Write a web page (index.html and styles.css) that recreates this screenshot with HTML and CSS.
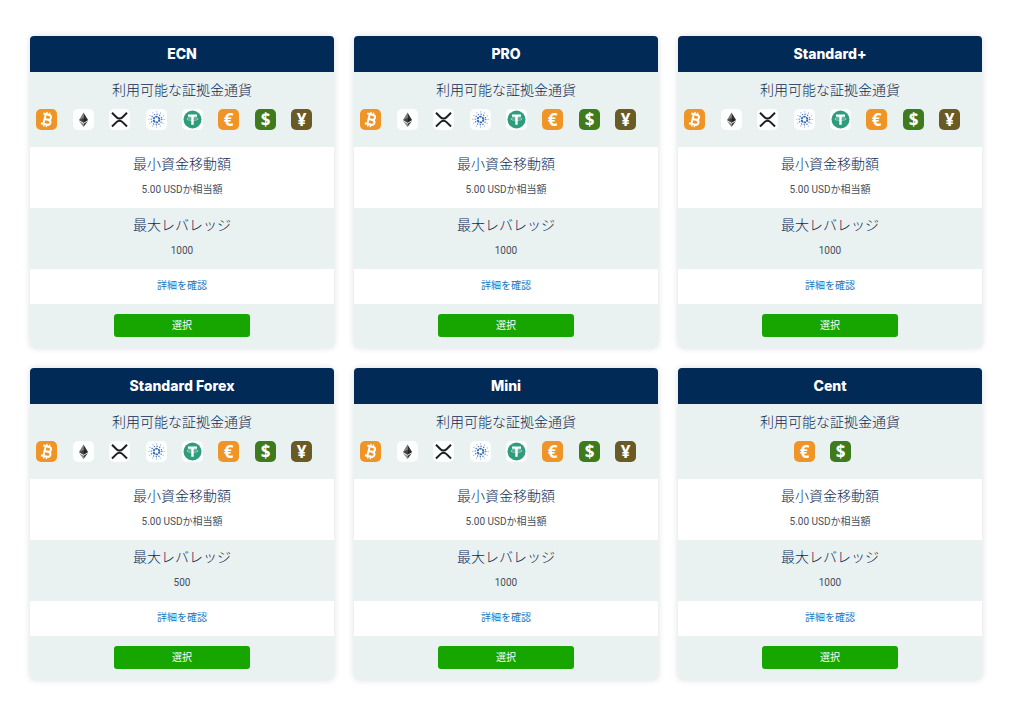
FILE: index.html
```html
<!DOCTYPE html>
<html lang="ja">
<head>
    <meta charset="UTF-8">
    <meta name="viewport" content="width=device-width, initial-scale=1.0">
    <title>口座タイプ</title>
    <link rel="stylesheet" href="styles.css">
</head>
<body>
    <!-- Currency icons shared by all cards -->
    <svg class="sprite" aria-hidden="true">
        <symbol id="btc" viewBox="0 0 21 21">
            <rect width="21" height="21" rx="5" fill="#ef9528"/>
            <g transform="rotate(14 10.5 10.5)" fill="none" stroke="#fff" stroke-width="2">
                <path d="M6 5.500h6a2.400 2.400 0 0 1 0 4.900H8.500M12 10.400h.6a2.500 2.500 0 0 1 0 5H6M8.500 5.500v9.900"/>
                <path d="M9.300 3v2.500M12 3v2.500M9.300 15.400V18M12 15.400V18" stroke-width="1.400"/>
            </g>
        </symbol>
        <symbol id="eth" viewBox="0 0 21 21">
            <rect width="21" height="21" rx="5" fill="#fdfefe"/>
            <path d="M10.5 3.500 6 11l4.500 2.700z" fill="#7d7d7d"/>
            <path d="M10.500 3.500 15 11l-4.500 2.700z" fill="#2f2f2f"/>
            <path d="M6 12l4.500 2.700V18z" fill="#8a8a8a"/>
            <path d="M15 12l-4.500 2.700V18z" fill="#3a3a3a"/>
            <path d="M6 11l4.500-2 4.500 2-4.500 2.700z" fill="#1c1c1c" opacity=".6"/>
        </symbol>
        <symbol id="xrp" viewBox="0 0 21 21">
            <rect width="21" height="21" rx="5" fill="#fdfefe"/>
            <path d="M3 3.800l4.500 4.400a4.200 4.200 0 0 0 6 0L18 3.800M3 17.500l4.500-4.400a4.200 4.200 0 0 1 6 0l4.500 4.400" fill="none" stroke="#1b1f22" stroke-width="2"/>
        </symbol>
        <symbol id="ada" viewBox="0 0 21 21">
            <rect width="21" height="21" rx="5" fill="#fdfefe"/>
            <g fill="none" stroke="#3468b4" stroke-linecap="round">
                <circle cx="10.500" cy="10.500" r="2.900" stroke-width="1.900" stroke-dasharray="2.300 .737" stroke-linecap="butt"/>
                <circle cx="10.500" cy="10.500" r="5.300" stroke-width="1.400" stroke-dasharray="0 2.775"/>
                <circle cx="10.500" cy="10.500" r="7.600" stroke-width="1" stroke-dasharray="0 3.979" opacity=".75"/>
            </g>
        </symbol>
        <symbol id="usdt" viewBox="0 0 21 21">
            <rect width="21" height="21" rx="5" fill="#fdfefe"/>
            <circle cx="10.500" cy="10.500" r="9" fill="#2f9c7c"/>
            <path d="M6 5.500h9v2.300h-3.300v8H9.300v-8H6z" fill="#fff"/>
            <ellipse cx="10.500" cy="10" rx="5.600" ry="1.300" fill="none" stroke="#fff" stroke-width=".5"/>
        </symbol>
        <symbol id="eur" viewBox="0 0 21 21">
            <rect width="21" height="21" rx="5" fill="#ef9528"/>
            <text x="10.5" y="16.500" class="sign">€</text>
        </symbol>
        <symbol id="usd" viewBox="0 0 21 21">
            <rect width="21" height="21" rx="5" fill="#3f7a1c"/>
            <text x="10.5" y="16.500" class="sign">$</text>
        </symbol>
        <symbol id="jpy" viewBox="0 0 21 21">
            <rect width="21" height="21" rx="5" fill="#6a5a26"/>
            <text x="10.5" y="16.500" class="sign">¥</text>
        </symbol>
    </svg>

    <main class="accounts">
        <section class="card">
            <h2 class="card-title">ECN</h2>
            <div class="currencies">
                <h3>利用可能な証拠金通貨</h3>
                <ul class="icons">
                    <li><svg role="img" aria-label="BTC"><use href="#btc"/></svg></li>
                    <li><svg role="img" aria-label="ETH"><use href="#eth"/></svg></li>
                    <li><svg role="img" aria-label="XRP"><use href="#xrp"/></svg></li>
                    <li><svg role="img" aria-label="ADA"><use href="#ada"/></svg></li>
                    <li><svg role="img" aria-label="USDT"><use href="#usdt"/></svg></li>
                    <li><svg role="img" aria-label="EUR"><use href="#eur"/></svg></li>
                    <li><svg role="img" aria-label="USD"><use href="#usd"/></svg></li>
                    <li><svg role="img" aria-label="JPY"><use href="#jpy"/></svg></li>
                </ul>
            </div>
            <div class="row white">
                <h3>最小資金移動額</h3>
                <p>5.00 USDか相当額</p>
            </div>
            <div class="row">
                <h3>最大レバレッジ</h3>
                <p>1000</p>
            </div>
            <div class="details white"><a href="#">詳細を確認</a></div>
            <div class="action"><button type="button">選択</button></div>
        </section>

        <section class="card">
            <h2 class="card-title">PRO</h2>
            <div class="currencies">
                <h3>利用可能な証拠金通貨</h3>
                <ul class="icons">
                    <li><svg role="img" aria-label="BTC"><use href="#btc"/></svg></li>
                    <li><svg role="img" aria-label="ETH"><use href="#eth"/></svg></li>
                    <li><svg role="img" aria-label="XRP"><use href="#xrp"/></svg></li>
                    <li><svg role="img" aria-label="ADA"><use href="#ada"/></svg></li>
                    <li><svg role="img" aria-label="USDT"><use href="#usdt"/></svg></li>
                    <li><svg role="img" aria-label="EUR"><use href="#eur"/></svg></li>
                    <li><svg role="img" aria-label="USD"><use href="#usd"/></svg></li>
                    <li><svg role="img" aria-label="JPY"><use href="#jpy"/></svg></li>
                </ul>
            </div>
            <div class="row white">
                <h3>最小資金移動額</h3>
                <p>5.00 USDか相当額</p>
            </div>
            <div class="row">
                <h3>最大レバレッジ</h3>
                <p>1000</p>
            </div>
            <div class="details white"><a href="#">詳細を確認</a></div>
            <div class="action"><button type="button">選択</button></div>
        </section>

        <section class="card">
            <h2 class="card-title">Standard+</h2>
            <div class="currencies">
                <h3>利用可能な証拠金通貨</h3>
                <ul class="icons">
                    <li><svg role="img" aria-label="BTC"><use href="#btc"/></svg></li>
                    <li><svg role="img" aria-label="ETH"><use href="#eth"/></svg></li>
                    <li><svg role="img" aria-label="XRP"><use href="#xrp"/></svg></li>
                    <li><svg role="img" aria-label="ADA"><use href="#ada"/></svg></li>
                    <li><svg role="img" aria-label="USDT"><use href="#usdt"/></svg></li>
                    <li><svg role="img" aria-label="EUR"><use href="#eur"/></svg></li>
                    <li><svg role="img" aria-label="USD"><use href="#usd"/></svg></li>
                    <li><svg role="img" aria-label="JPY"><use href="#jpy"/></svg></li>
                </ul>
            </div>
            <div class="row white">
                <h3>最小資金移動額</h3>
                <p>5.00 USDか相当額</p>
            </div>
            <div class="row">
                <h3>最大レバレッジ</h3>
                <p>1000</p>
            </div>
            <div class="details white"><a href="#">詳細を確認</a></div>
            <div class="action"><button type="button">選択</button></div>
        </section>

        <section class="card">
            <h2 class="card-title">Standard Forex</h2>
            <div class="currencies">
                <h3>利用可能な証拠金通貨</h3>
                <ul class="icons">
                    <li><svg role="img" aria-label="BTC"><use href="#btc"/></svg></li>
                    <li><svg role="img" aria-label="ETH"><use href="#eth"/></svg></li>
                    <li><svg role="img" aria-label="XRP"><use href="#xrp"/></svg></li>
                    <li><svg role="img" aria-label="ADA"><use href="#ada"/></svg></li>
                    <li><svg role="img" aria-label="USDT"><use href="#usdt"/></svg></li>
                    <li><svg role="img" aria-label="EUR"><use href="#eur"/></svg></li>
                    <li><svg role="img" aria-label="USD"><use href="#usd"/></svg></li>
                    <li><svg role="img" aria-label="JPY"><use href="#jpy"/></svg></li>
                </ul>
            </div>
            <div class="row white">
                <h3>最小資金移動額</h3>
                <p>5.00 USDか相当額</p>
            </div>
            <div class="row">
                <h3>最大レバレッジ</h3>
                <p>500</p>
            </div>
            <div class="details white"><a href="#">詳細を確認</a></div>
            <div class="action"><button type="button">選択</button></div>
        </section>

        <section class="card">
            <h2 class="card-title">Mini</h2>
            <div class="currencies">
                <h3>利用可能な証拠金通貨</h3>
                <ul class="icons">
                    <li><svg role="img" aria-label="BTC"><use href="#btc"/></svg></li>
                    <li><svg role="img" aria-label="ETH"><use href="#eth"/></svg></li>
                    <li><svg role="img" aria-label="XRP"><use href="#xrp"/></svg></li>
                    <li><svg role="img" aria-label="ADA"><use href="#ada"/></svg></li>
                    <li><svg role="img" aria-label="USDT"><use href="#usdt"/></svg></li>
                    <li><svg role="img" aria-label="EUR"><use href="#eur"/></svg></li>
                    <li><svg role="img" aria-label="USD"><use href="#usd"/></svg></li>
                    <li><svg role="img" aria-label="JPY"><use href="#jpy"/></svg></li>
                </ul>
            </div>
            <div class="row white">
                <h3>最小資金移動額</h3>
                <p>5.00 USDか相当額</p>
            </div>
            <div class="row">
                <h3>最大レバレッジ</h3>
                <p>1000</p>
            </div>
            <div class="details white"><a href="#">詳細を確認</a></div>
            <div class="action"><button type="button">選択</button></div>
        </section>

        <section class="card">
            <h2 class="card-title">Cent</h2>
            <div class="currencies">
                <h3>利用可能な証拠金通貨</h3>
                <ul class="icons">
                    <li><svg role="img" aria-label="EUR"><use href="#eur"/></svg></li>
                    <li><svg role="img" aria-label="USD"><use href="#usd"/></svg></li>
                </ul>
            </div>
            <div class="row white">
                <h3>最小資金移動額</h3>
                <p>5.00 USDか相当額</p>
            </div>
            <div class="row">
                <h3>最大レバレッジ</h3>
                <p>1000</p>
            </div>
            <div class="details white"><a href="#">詳細を確認</a></div>
            <div class="action"><button type="button">選択</button></div>
        </section>
    </main>
</body>
</html>
```
FILE: styles.css
```css
* {
    box-sizing: border-box;
}
body {
    margin: 0;
    background-color: #fff;
    color: #0f2c55;
    font-family: Inter, "Noto Sans CJK JP", sans-serif;
    text-align: center;
}
h2, h3, p, ul {
    margin: 0;
    padding: 0;
}
.sprite {
    display: none;
}
.sign {
    fill: #fff;
    font-family: "Noto Sans", sans-serif;
    font-size: 17px;
    font-weight: bold;
    text-anchor: middle;
}
.accounts {
    display: grid;
    grid-template-columns: repeat(3, 1fr);
    gap: 20px;
    padding: 36px 42px 20px 30px;
}
.card {
    background-color: #eaf1f1;
    border-radius: 5px;
    box-shadow: 0 0 6px rgba(0, 30, 60, 0.15);
}
.card-title {
    padding: 8px;
    background-color: #022a57;
    border-radius: 4px 4px 0 0;
    color: #fff;
    font-size: 14px;
    font-weight: 800;
    line-height: 20px;
}
h3 {
    font-size: 14px;
    font-weight: 300;
    line-height: 20px;
}
.currencies {
    padding: 8px 0 17px;
}
.icons {
    display: flex;
    justify-content: center;
    margin-top: 9px;
    list-style: none;
}
.icons li {
    flex: 0 0 12%;
    height: 21px;
    text-align: left;
}
.icons svg {
    display: block;
    width: 21px;
    height: 21px;
}
.row {
    padding: 7px 0 10px;
}
.row p {
    margin-top: 8px;
    color: #444f5c;
    font-family: Roboto, "Noto Sans CJK JP", sans-serif;
    font-size: 10px;
    line-height: 16px;
}
.white {
    background-color: #fff;
}
.details {
    padding: 8px 0 11px;
    font-size: 10px;
    line-height: 16px;
}
.details a {
    color: #2276bd;
    text-decoration: none;
}
.action {
    padding: 10px 0 11px;
}
.action button {
    display: block;
    width: 45%;
    margin: 0 auto;
    padding: 3px 0 4px;
    border: 0;
    border-radius: 3px;
    background-color: #17a500;
    color: #fff;
    font-family: inherit;
    font-size: 10px;
    line-height: 16px;
}
```
